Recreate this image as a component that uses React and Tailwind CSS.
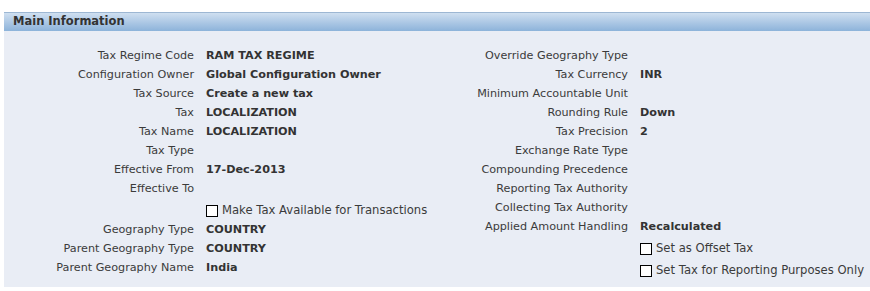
const LEFT = [
  { label: 'Tax Regime Code', value: 'RAM TAX REGIME' },
  { label: 'Configuration Owner', value: 'Global Configuration Owner' },
  { label: 'Tax Source', value: 'Create a new tax' },
  { label: 'Tax', value: 'LOCALIZATION' },
  { label: 'Tax Name', value: 'LOCALIZATION' },
  { label: 'Tax Type', value: '' },
  { label: 'Effective From', value: '17-Dec-2013' },
  { label: 'Effective To', value: '' },
  { check: 'Make Tax Available for Transactions' },
  { label: 'Geography Type', value: 'COUNTRY' },
  { label: 'Parent Geography Type', value: 'COUNTRY' },
  { label: 'Parent Geography Name', value: 'India' },
]

const RIGHT = [
  { label: 'Override Geography Type', value: '' },
  { label: 'Tax Currency', value: 'INR' },
  { label: 'Minimum Accountable Unit', value: '' },
  { label: 'Rounding Rule', value: 'Down' },
  { label: 'Tax Precision', value: '2' },
  { label: 'Exchange Rate Type', value: '' },
  { label: 'Compounding Precedence', value: '' },
  { label: 'Reporting Tax Authority', value: '' },
  { label: 'Collecting Tax Authority', value: '' },
  { label: 'Applied Amount Handling', value: 'Recalculated' },
  { check: 'Set as Offset Tax' },
  { check: 'Set Tax for Reporting Purposes Only' },
]

function Row({ item, labelW }) {
  if (item.check) {
    return (
      <div className="flex items-center h-[22px] pt-[3px] whitespace-nowrap">
        <div className="shrink-0" style={{ width: labelW }} />
        <div className="flex items-center pl-[12px]">
          <span className="w-[12px] h-[12px] border border-black bg-white" />
          <span className="ml-[4px] text-[11.6px] text-[#3b3b3b]">{item.check}</span>
        </div>
      </div>
    )
  }
  return (
    <div className="flex items-center h-[19px] whitespace-nowrap">
      <div className="shrink-0 text-right text-[#3b3b3b]" style={{ width: labelW }}>{item.label}</div>
      <div className="pl-[12px] font-bold text-[#333]">{item.value}</div>
    </div>
  )
}

export default function App() {
  return (
    <div className="bg-white h-[291px] pt-[12px] pl-[4px] font-['DejaVu_Sans',sans-serif] text-[11.2px] leading-none">
      <div className="h-[19px] border-t border-[#9db7d3] bg-gradient-to-b from-[#cfdff0] to-[#8db3da] flex items-center pl-[9px]">
        <span className="font-bold text-[11.5px] text-[#333]">Main Information</span>
      </div>
      <div className="h-[256px] bg-[#e9edf5] pt-[15px] flex">
        <div className="w-[436px]">
          {LEFT.map((item, i) => <Row key={i} item={item} labelW="190px" />)}
        </div>
        <div>
          {RIGHT.map((item, i) => <Row key={i} item={item} labelW="188px" />)}
        </div>
      </div>
    </div>
  )
}
